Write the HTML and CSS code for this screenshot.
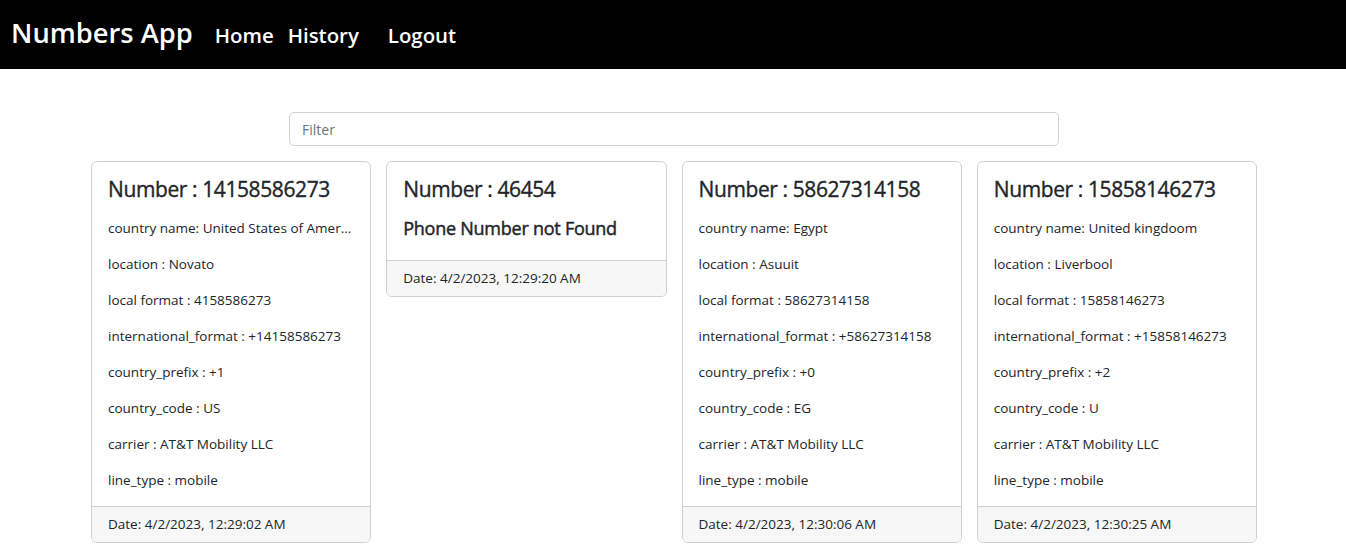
FILE: index.html
```html
<!DOCTYPE html>
<html lang="en">
<head>
<meta charset="utf-8">
<title>Numbers App</title>
<link rel="stylesheet" href="styles.css">
</head>
<body>
<nav class="navbar">
  <a class="brand" href="#">Numbers App</a>
  <a class="nav-link" href="#">Home</a>
  <a class="nav-link" href="#">History</a>
  <a class="nav-link logout" href="#">Logout</a>
</nav>
<main class="main">
  <input class="filter" type="text" placeholder="Filter">
  <div class="cards">
    <div class="card">
      <div class="card-body">
        <h4 class="card-title">Number : 14158586273</h4>
        <p class="card-text">country name: United States of America</p>
        <p class="card-text">location : Novato</p>
        <p class="card-text">local format : 4158586273</p>
        <p class="card-text">international_format : +14158586273</p>
        <p class="card-text">country_prefix : +1</p>
        <p class="card-text">country_code : US</p>
        <p class="card-text">carrier : AT&amp;T Mobility LLC</p>
        <p class="card-text">line_type : mobile</p>
      </div>
      <div class="card-footer">Date: 4/2/2023, 12:29:02 AM</div>
    </div>
    <div class="card">
      <div class="card-body">
        <h4 class="card-title">Number : 46454</h4>
        <h5 class="not-found">Phone Number not Found</h5>
      </div>
      <div class="card-footer">Date: 4/2/2023, 12:29:20 AM</div>
    </div>
    <div class="card">
      <div class="card-body">
        <h4 class="card-title">Number : 58627314158</h4>
        <p class="card-text">country name: Egypt</p>
        <p class="card-text">location : Asuuit</p>
        <p class="card-text">local format : 58627314158</p>
        <p class="card-text">international_format : +58627314158</p>
        <p class="card-text">country_prefix : +0</p>
        <p class="card-text">country_code : EG</p>
        <p class="card-text">carrier : AT&amp;T Mobility LLC</p>
        <p class="card-text">line_type : mobile</p>
      </div>
      <div class="card-footer">Date: 4/2/2023, 12:30:06 AM</div>
    </div>
    <div class="card">
      <div class="card-body">
        <h4 class="card-title">Number : 15858146273</h4>
        <p class="card-text">country name: United kingdoom</p>
        <p class="card-text">location : Liverbool</p>
        <p class="card-text">local format : 15858146273</p>
        <p class="card-text">international_format : +15858146273</p>
        <p class="card-text">country_prefix : +2</p>
        <p class="card-text">country_code : U</p>
        <p class="card-text">carrier : AT&amp;T Mobility LLC</p>
        <p class="card-text">line_type : mobile</p>
      </div>
      <div class="card-footer">Date: 4/2/2023, 12:30:25 AM</div>
    </div>
  </div>
</main>
</body>
</html>
```
FILE: styles.css
```css
* { box-sizing: border-box; }
body {
  margin: 0;
  font-family: "Open Sans", "Noto Sans", sans-serif;
  color: #212529;
  background: #fff;
}
.navbar {
  height: 69px;
  background: #000;
  display: flex;
  align-items: baseline;
  padding: 19px 0 0 11px;
}
.brand {
  color: #fff;
  text-decoration: none;
  font-size: 27.3px;
  font-weight: 600;
  margin-right: 22px;
  line-height: 27px;
}
.nav-link {
  color: #fff;
  text-decoration: none;
  font-size: 20.4px;
  font-weight: 600;
  margin-right: 14px;
  line-height: 1;
}
.nav-link.logout { margin-left: 15px; }
.main {
  display: flex;
  flex-direction: column;
  align-items: center;
  padding-top: 43px;
}
.filter {
  width: 770px;
  height: 34px;
  border: 1px solid #ced4da;
  border-radius: 5px;
  padding: 0 12px;
  font-family: inherit;
  font-size: 14px;
  color: #212529;
  outline: none;
  margin-left: 2px;
}
.filter::placeholder { color: #6c757d; }
.cards {
  display: flex;
  align-items: flex-start;
  gap: 15px;
  margin-top: 15px;
  margin-left: 2px;
}
.card {
  width: 280.25px;
  border: 1px solid #d0d0d0;
  border-radius: 6px;
  overflow: hidden;
  background: #fff;
}
.card-body { padding: 16px; }
.card-title {
  margin: 0 0 18px;
  font-size: 21px;
  font-weight: 400;
  letter-spacing: -0.4px;
  line-height: 22px;
  -webkit-text-stroke: 0.35px currentColor;
}
.card-text {
  margin: 0 0 16px;
  font-size: 13.5px;
  line-height: 20px;
  white-space: nowrap;
  overflow: hidden;
  text-overflow: ellipsis;
}
.card-text:last-child { margin-bottom: 0; }
.not-found {
  margin: 0 0 6px;
  font-size: 18px;
  font-weight: 400;
  letter-spacing: -0.25px;
  line-height: 20px;
  -webkit-text-stroke: 0.45px currentColor;
}
.card-footer {
  background: #f7f7f7;
  border-top: 1px solid #d0d0d0;
  padding: 7px 16px 8px;
  font-size: 13.5px;
  line-height: 20px;
}
```
